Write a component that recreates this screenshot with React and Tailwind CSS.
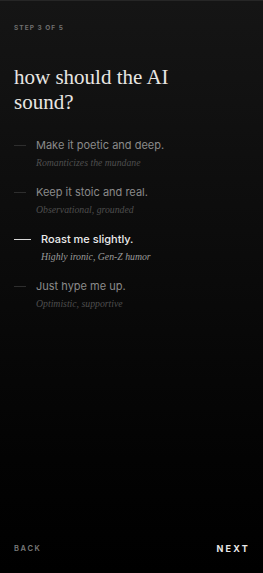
import React from "react";

const options = [
  { t: "Make it poetic and deep.", s: "Romanticizes the mundane" },
  { t: "Keep it stoic and real.", s: "Observational, grounded" },
  { t: "Roast me slightly.", s: "Highly ironic, Gen-Z humor", sel: true },
  { t: "Just hype me up.", s: "Optimistic, supportive" },
];

export default function App() {
  return (
    <div className="w-[263px] h-[573px] flex flex-col bg-[linear-gradient(180deg,#151515_0%,#0c0c0c_40%,#030303_80%,#000_100%)] border-t border-[#262626] overflow-hidden">
      <div className="px-[14px] pt-[23px] text-[6.5px] font-bold tracking-[0.16em] text-[#6f6f6f] font-['Inter',sans-serif]">
        STEP 3 OF 5
      </div>
      <h1 className="px-[14px] mt-[31px] text-[21px] leading-[25px] text-[#e8e6e2] font-['Liberation_Serif',serif]">
        how should the AI<br />sound?
      </h1>
      <div className="mt-[23px] flex flex-col gap-[16px] px-[14px]">
        {options.map((o) => (
          <div key={o.t} className="flex items-start">
            <div className={o.sel ? "mt-[7px] w-[17px] h-px bg-[#d8d8d8] mr-[10px]" : "mt-[7px] w-[12px] h-px bg-[#2e2e2e] mr-[10px]"} />
            <div className="flex flex-col">
              <div className={"text-[11px] leading-[15px] font-['Inter',sans-serif] " + (o.sel ? "text-[#ececec] font-medium" : "text-[#8a8a8a]")}>
                {o.t}
              </div>
              <div className={"mt-[3px] text-[9.75px] leading-[13px] italic font-['Liberation_Serif',serif] " + (o.sel ? "text-[#9a9a9a]" : "text-[#4e4e4e]")}>
                {o.s}
              </div>
            </div>
          </div>
        ))}
      </div>
      <div className="mt-auto mb-[18px] px-[14px] flex items-center justify-between font-['Inter',sans-serif]">
        <span className="text-[7.5px] font-semibold tracking-[0.22em] text-[#7a7a7a]">BACK</span>
        <span className="text-[9px] font-bold tracking-[0.25em] text-[#e8e8e8] mr-[-1px]">NEXT</span>
      </div>
    </div>
  );
}
